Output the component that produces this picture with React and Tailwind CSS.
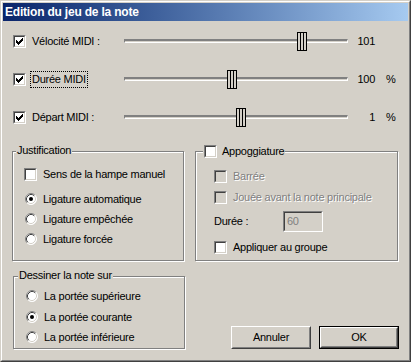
import React from "react";

const checkCols = [2, 3, 4, 3, 2, 1, 0];

function Checkbox({ checked, disabled }) {
  return (
    <span className="block w-[13px] h-[13px] shrink-0 border border-t-[#808080] border-l-[#808080] border-r-white border-b-white">
      <span
        className={
          disabled
            ? "block w-full h-full border border-t-[#404040] border-l-[#404040] border-r-[#d4d0c8] border-b-[#d4d0c8] bg-[#d4d0c8]"
            : "block w-full h-full border border-t-[#404040] border-l-[#404040] border-r-[#d4d0c8] border-b-[#d4d0c8] bg-white"
        }
      >
        {checked && (
          <svg width="9" height="9" viewBox="0 0 9 9" shapeRendering="crispEdges" className="block">
            {checkCols.map((t, i) => (
              <rect key={i} x={1 + i} y={1 + t} width="1" height="3" fill="#000" />
            ))}
          </svg>
        )}
      </span>
    </span>
  );
}

function Radio({ checked }) {
  return (
    <span className="block w-[13px] h-[12px] shrink-0 pl-[1px]">
      <svg width="12" height="12" viewBox="0 0 12 12" className="block">
        <circle cx="6" cy="6" r="5.5" fill="#fff" />
        <path d="M2.11 9.89 A5.5 5.5 0 0 1 9.89 2.11" fill="none" stroke="#808080" strokeWidth="1" />
        <path d="M9.89 2.11 A5.5 5.5 0 0 1 2.11 9.89" fill="none" stroke="#ffffff" strokeWidth="1" />
        <path d="M2.82 9.18 A4.5 4.5 0 0 1 9.18 2.82" fill="none" stroke="#404040" strokeWidth="1" />
        <path d="M9.18 2.82 A4.5 4.5 0 0 1 2.82 9.18" fill="none" stroke="#d4d0c8" strokeWidth="1" />
        {checked && <circle cx="6" cy="6" r="2" fill="#000" />}
      </svg>
    </span>
  );
}

function Slider({ pos }) {
  return (
    <div className="relative w-[224px] h-[19px] flex items-center shrink-0">
      <div className="w-full h-[4px] border-t-2 border-l border-b border-r border-t-[#808080] border-l-[#808080] border-b-white border-r-white" />
      <div
        className="absolute top-0 w-[10px] h-[19px] border border-black bg-[#d4d0c8] flex justify-center gap-[2px]"
        style={{ left: pos }}
      >
        <div className="w-px h-full bg-black" />
        <div className="w-px h-full bg-black" />
      </div>
    </div>
  );
}

function SliderRow({ label, focused, pos, value, pct }) {
  return (
    <div className="flex items-center h-[38px]">
      <div className="w-[111px] flex items-center shrink-0">
        <Checkbox checked />
        <span
          className={
            focused
              ? "ml-[4px] px-[1px] border border-dotted border-black leading-[15px]"
              : "ml-[4px] px-[1px] border border-transparent leading-[15px]"
          }
        >
          {label}
        </span>
      </div>
      <Slider pos={pos} />
      <div className="w-[27px] text-right shrink-0">{value}</div>
      {pct && <div className="ml-[11px]">%</div>}
    </div>
  );
}

function GroupBox({ legend, className, legendClass, children }) {
  return (
    <div
      className={
        "relative border border-[#808080] shadow-[inset_1px_1px_0_#fff,1px_1px_0_#fff] " + className
      }
    >
      <div className={"absolute flex items-center bg-[#d4d0c8] px-[1px] leading-[13px] " + legendClass}>
        {legend}
      </div>
      {children}
    </div>
  );
}

function OptRow({ children, className }) {
  return <div className={"flex items-center h-[20px] " + (className || "")}>{children}</div>;
}

const disabledText = "text-[#808080] [text-shadow:1px_1px_0_#fff]";

export default function App() {
  return (
    <div className="w-[411px] h-[362px] font-['Liberation_Sans',Arial,sans-serif] text-[11px] tracking-[-0.25px] text-black">
      <div className="w-full h-full border border-t-[#d4d0c8] border-l-[#d4d0c8] border-r-[#404040] border-b-[#404040]">
        <div className="w-full h-full border border-t-white border-l-white border-r-[#808080] border-b-[#808080] bg-[#d4d0c8] p-px flex flex-col">
          {/* Title bar */}
          <div className="h-[18px] shrink-0 flex items-center pl-[2px] bg-linear-to-r from-[#0a246a] to-[#a6caf0]">
            <span className="text-white font-bold text-[12px] tracking-[-0.2px]">Edition du jeu de la note</span>
          </div>

          {/* Content */}
          <div className="flex flex-col pt-px pl-[10px]">
            <SliderRow label="Vélocité MIDI :" pos={173} value="101" />
            <SliderRow label="Durée MIDI" focused pos={103} value="100" pct />
            <SliderRow label="Départ MIDI :" pos={112} value="1" pct />
          </div>

          <div className="flex mt-[15px] pl-[9px]">
            {/* Left column */}
            <div className="flex flex-col w-[173px] shrink-0">
              <GroupBox legend="Justification" className="w-[172px] h-[110px] pl-[11px] pt-[12px]" legendClass="left-[3px] top-[-8px]">
                <OptRow>
                  <Checkbox />
                  <span className="ml-[6px]">Sens de la hampe manuel</span>
                </OptRow>
                <OptRow className="mt-[5px]">
                  <Radio checked />
                  <span className="ml-[6px]">Ligature automatique</span>
                </OptRow>
                <OptRow>
                  <Radio />
                  <span className="ml-[6px]">Ligature empêchée</span>
                </OptRow>
                <OptRow>
                  <Radio />
                  <span className="ml-[6px]">Ligature forcée</span>
                </OptRow>
              </GroupBox>

              <GroupBox legend="Dessiner la note sur" className="ml-px mt-[15px] w-[172px] h-[73px] pl-[11px] pt-[9px]" legendClass="left-[4px] top-[-8px]">
                <OptRow>
                  <Radio />
                  <span className="ml-[6px]">La portée supérieure</span>
                </OptRow>
                <OptRow className="mt-px">
                  <Radio checked />
                  <span className="ml-[6px]">La portée courante</span>
                </OptRow>
                <OptRow>
                  <Radio />
                  <span className="ml-[6px]">La portée inférieure</span>
                </OptRow>
              </GroupBox>
            </div>

            {/* Right column */}
            <div className="ml-[10px] w-[204px] flex flex-col shrink-0">
              <GroupBox
                legend={
                  <>
                    <Checkbox />
                    <span className="ml-[5px] leading-[13px]">Appoggiature</span>
                  </>
                }
                className="w-[203px] h-[110px] pl-[18px] pt-[14px]"
                legendClass="left-[7px] top-[-7px]"
              >
                <OptRow>
                  <Checkbox disabled />
                  <span className={"ml-[6px] " + disabledText}>Barrée</span>
                </OptRow>
                <OptRow className="mt-px">
                  <Checkbox disabled />
                  <span className={"ml-[6px] " + disabledText}>Jouée avant la note principale</span>
                </OptRow>
                <div className="flex items-center h-[21px] mt-[4px]">
                  <span className="w-[69px] shrink-0">Durée :</span>
                  <div className="w-[40px] h-[21px] border border-t-[#808080] border-l-[#808080] border-r-white border-b-white">
                    <div className="w-full h-full border border-t-[#404040] border-l-[#404040] border-r-[#d4d0c8] border-b-[#d4d0c8] bg-[#d4d0c8] flex items-center pl-[2px] text-[#808080]">
                      60
                    </div>
                  </div>
                </div>
                <OptRow className="mt-[5px]">
                  <Checkbox />
                  <span className="ml-[6px]">Appliquer au groupe</span>
                </OptRow>
              </GroupBox>

              <div className="flex justify-end gap-[8px] mt-[65px]">
                <div className="w-[80px] h-[23px] border border-t-white border-l-white border-r-[#404040] border-b-[#404040]">
                  <div className="w-full h-full border border-t-[#d4d0c8] border-l-[#d4d0c8] border-r-[#808080] border-b-[#808080] flex items-center justify-center">
                    Annuler
                  </div>
                </div>
                <div className="w-[80px] h-[23px] border border-black">
                  <div className="w-full h-full border border-t-white border-l-white border-r-[#404040] border-b-[#404040]">
                    <div className="w-full h-full border border-t-[#d4d0c8] border-l-[#d4d0c8] border-r-[#808080] border-b-[#808080] flex items-center justify-center">
                      OK
                    </div>
                  </div>
                </div>
              </div>
            </div>
          </div>
        </div>
      </div>
    </div>
  );
}
